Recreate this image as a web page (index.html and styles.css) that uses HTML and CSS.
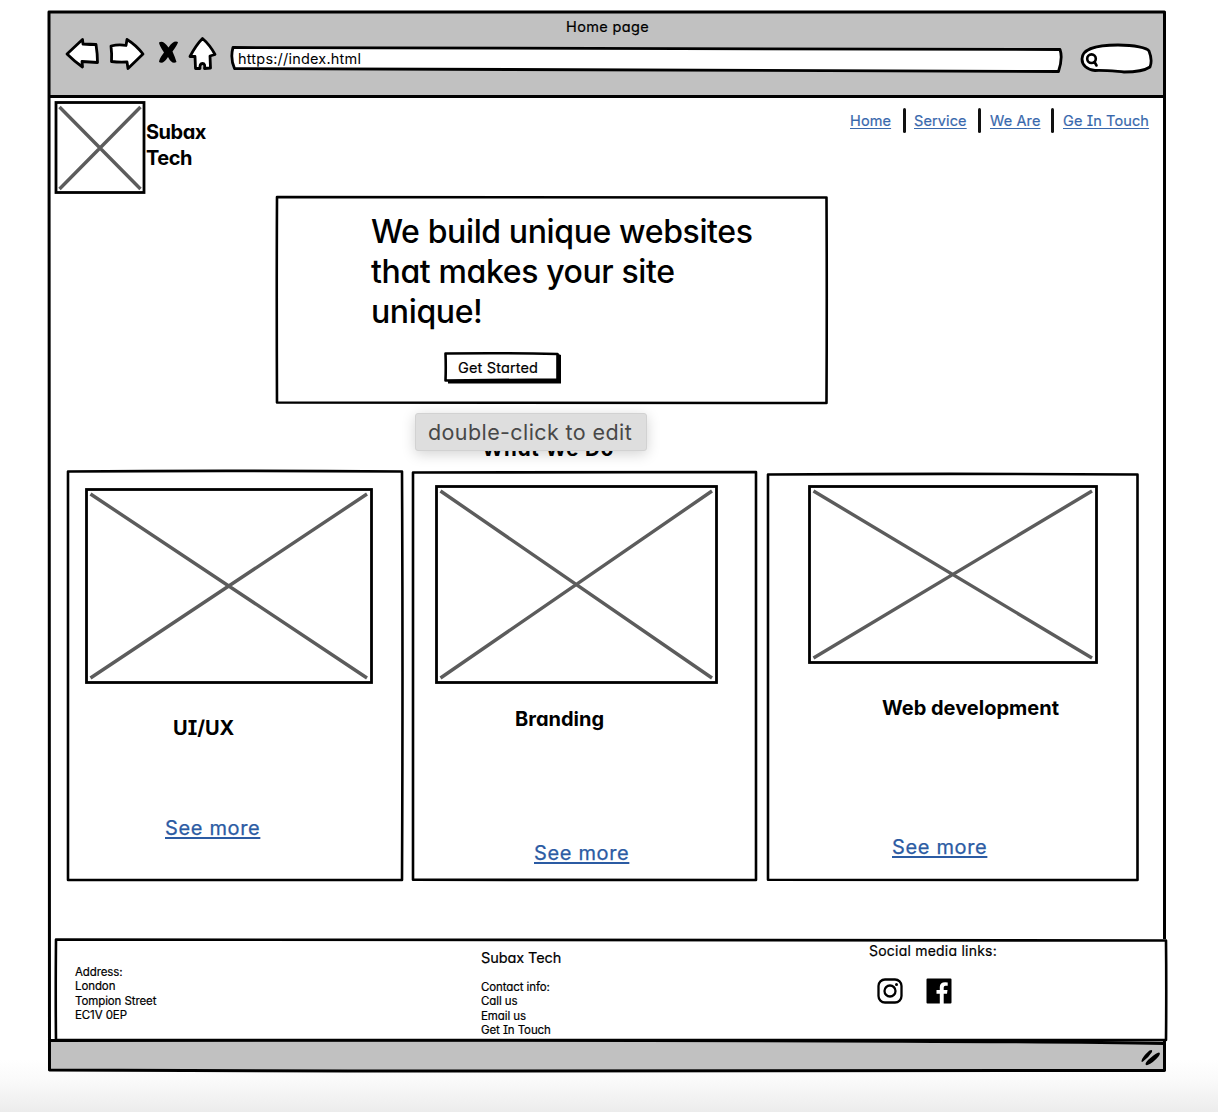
FILE: index.html
```html
<!DOCTYPE html>
<html lang="en">
<head>
<meta charset="utf-8">
<title>Home page</title>
<link rel="stylesheet" href="styles.css">
</head>
<body>
<div class="window">
  <svg class="frame ink-line window-frame"><path d="M1 1 H1116.500 Q1117.500 500 1116.500 1059.500 Q600 1058 300 1060 L1.500 1059 Q1 500 1 1Z M1 85.500 Q500 84.500 1116.500 85.500 M1 1029.500 Q900 1028.500 1116.500 1032.500"/></svg>
  <div class="toolbar">
    <div class="window-title">Home page</div>
    <div class="controls">
      <svg class="nav-icons" width="158" height="36" viewBox="62 36 158 36">
        <g class="ink-shape">
          <path d="M67 54 L82.500 39.500 L83 44 Q91 44.500 96 44.500 Q97.500 54 97.500 62.500 L82 61.500 L82.500 67 Q74 61 67 54Z"/>
          <path d="M111 46 Q119 44 126 45.500 L127 39.500 Q136 45 143 54 L128 68.500 L127 62 Q119 62.500 111.500 61.500 Q112 54 111 46Z"/>
          <path d="M202.500 38.500 Q210 45 215 54.500 L210 56 L210.500 68 L204.500 68.500 Q205.500 63.500 202.500 63.500 Q199.500 63.500 200 68.500 L195.500 68.500 L195 56.500 L190 56.500 Q196 45 202.500 38.500Z"/>
        </g>
        <path d="M159 42.500 Q163 39.500 168.500 47.500 Q173.500 40 178 42 Q178 44 172.500 51.500 Q175 57 176.500 62 Q172 65 168 57 Q163 65 159 62 Q159 59 164 52.500 Q159 45 159 42.500Z"/>
      </svg>
      <div class="address">
        <svg class="frame ink-shape"><path d="M3 1.500 Q400 1 830 3.500 Q833 12 828.500 25.500 Q400 24 4.500 22.500 Q0 12 3 1.500Z"/></svg>
        <span>https://index.html</span>
      </div>
      <svg class="search" width="76" height="34" viewBox="1078 42 76 34">
        <path class="ink-shape" d="M1082 59 C1082 47 1103 45 1118 45 C1135 45 1147 48 1149 51 C1151 56 1152 62 1150 67 C1144 71 1135 72 1124 72 C1112 71 1104 70 1095 70.500 C1087 70 1082 65 1082 59Z"/>
        <g class="ink-shape magnifier"><circle cx="1091.500" cy="58.700" r="4.300"/><path d="M1094.500 62 L1096.500 65.500"/></g>
      </svg>
    </div>
  </div>

  <header class="site-header">
    <svg class="logo" viewBox="0 0 91 93"><rect x="1.500" y="1.500" width="88" height="90"/><path d="M5 6 L86 88 M86 6 L5 88"/></svg>
    <div class="brand">Subax<br>Tech</div>
    <nav class="site-nav">
      <a>Home</a><i></i><a>Service</a><i></i><a>We Are</a><i></i><a>Ge In Touch</a>
    </nav>
  </header>

  <section class="hero">
    <svg class="frame ink-line"><path d="M1 1 Q270 .5 550.500 1.500 Q551 100 550.500 207 Q270 207.500 1 206.500 Q.5 100 1 1Z"/></svg>
    <h1>We build unique websites<br>that makes your site<br>unique!</h1>
    <div class="button">
      <svg class="frame"><path d="M4 28 L110 27 L113 1.500 L117 3 L117 31.500 L4 31.500Z"/><path class="button-face" d="M1.500 1.500 Q60 .7 113.500 2 L113.500 27.500 Q60 28 1.500 28.500 Q2 15 1.500 1.500Z"/></svg>
      <span>Get Started</span>
    </div>
  </section>

  <h2 class="section-title">What We Do</h2>

  <section class="cards">
    <article class="card card-design">
      <svg class="frame ink-line"><path d="M1 1.500 Q150 .3 335 1.500 Q336 200 335 410 Q160 410.700 1 410 Q.5 200 1 1.500Z"/></svg>
      <svg class="picture" viewBox="0 0 288 196"><rect x="1.500" y="1.500" width="285" height="193"/><path d="M5.500 6 L282 190 M282 6 L5.500 190"/></svg>
      <h3>UI/UX</h3>
      <a class="more">See more</a>
    </article>
    <article class="card card-branding">
      <svg class="frame ink-line"><path d="M1 1.500 Q170 .7 344 1 Q344.500 200 344 409 Q170 409.500 1 408.800 Q.5 200 1 1.500Z"/></svg>
      <svg class="picture" viewBox="0 0 283 199"><rect x="1.500" y="1.500" width="280" height="196"/><path d="M5.500 6 L277 193 M277 6 L5.500 193"/></svg>
      <h3>Branding</h3>
      <a class="more">See more</a>
    </article>
    <article class="card card-web">
      <svg class="frame ink-line"><path d="M1 1.500 Q180 .3 370.500 1.500 Q371 200 370.500 407 Q180 407.500 1 406.800 Q.5 200 1 1.500Z"/></svg>
      <svg class="picture" viewBox="0 0 290 179"><rect x="1.500" y="1.500" width="287" height="176"/><path d="M5.500 6 L284 173 M284 6 L5.500 173"/></svg>
      <h3>Web development</h3>
      <a class="more">See more</a>
    </article>
  </section>

  <footer class="site-footer">
    <svg class="frame ink-line"><path d="M1 .5 Q600 -.5 1111 1.500 Q1111.500 50 1111 101 Q600 100 1 101 Q.5 60 1 .5Z"/></svg>
    <div class="office">Address:<br>London<br>Tompion Street<br>EC1V 0EP</div>
    <div class="contact">
      <div class="company">Subax Tech</div>
      <div>Contact info:<br>Call us<br>Email us<br>Get In Touch</div>
    </div>
    <div class="social">
      <div>Social media links:</div>
      <div class="social-icons">
        <svg width="26" height="26" viewBox="0 0 26 26" fill="none" stroke="#000" stroke-width="2.300"><rect x="1.500" y="1.500" width="23" height="23" rx="6.500"/><circle cx="13" cy="13" r="5.500"/><circle cx="19.500" cy="6.500" r="1.500" fill="#000" stroke="none"/></svg>
        <svg width="26" height="26" viewBox="0 0 26 26"><path d="M1.500 .5H24.500Q25.500 .5 25.500 1.500V24.500Q25.500 25.500 24.500 25.500H17.700V15.800H21L21.500 12H17.700V9.500Q17.700 7.800 19.500 7.800H21.700V4.400Q13.800 3.200 13.800 9V12H10.500V15.800H13.800V25.500H1.500Q.5 25.500 .5 24.500V1.500Q.5 .5 1.500 .5Z"/></svg>
      </div>
    </div>
  </footer>

  <div class="status-bar">
    <svg width="22" height="20" viewBox="1140 1049 22 20"><path d="M1141.500 1062 Q1142 1058 1149.500 1051.500 Q1153 1050 1152 1053 Q1149 1058 1143 1062.500 Q1141.500 1063.500 1141.500 1062Z M1145.500 1065 Q1146 1062 1151 1058.500 Q1156 1054 1159 1053.500 Q1161 1054 1158.500 1057.500 Q1153 1064 1147.500 1066 Q1145.500 1066.500 1145.500 1065Z"/></svg>
  </div>

  <div class="tooltip">double-click to edit</div>
</div>
</body>
</html>
```
FILE: styles.css
```css
* { box-sizing: border-box; }
body {
  margin: 0;
  height: 1112px;
  padding: 11px 0 0 48px;
  overflow: hidden;
  background: linear-gradient(#fff 1060px, #fafafa 1080px, #ececec 1112px);
  color: #000;
  font-family: Inter, "Liberation Sans", sans-serif;
  font-feature-settings: "cv11", "cv08";
  white-space: nowrap;
}
h1, h2, h3 { margin: 0; }
svg { display: block; }

.window { position: relative; width: 1118px; height: 1060px; background: #fff; }
.frame { position: absolute; inset: 0; width: 100%; height: 100%; overflow: visible; }
.ink-line { fill: none; stroke: #000; stroke-width: 2.6px; stroke-linejoin: round; }
.window-frame { stroke-width: 3px; }
.ink-shape { fill: #fff; stroke: #000; stroke-width: 2.8px; stroke-linejoin: round; }
.magnifier { stroke-width: 2.6px; stroke-linecap: round; }

.toolbar { height: 86px; background: #c1c1c1; }
.window-title { padding: 6px 0 0 518px; font-size: 14.5px; line-height: 20px; letter-spacing: .35px; -webkit-text-stroke: .2px; }
.controls { display: flex; padding-left: 14px; }
.nav-icons { margin-top: -1px; }
.address { position: relative; width: 832px; height: 27px; margin: 9px 0 0 10px; padding-left: 8px; font-size: 14.5px; letter-spacing: .2px; line-height: 25px; }
.address span { position: relative; }
.search { margin: 5px 0 0 16px; }

.site-header { display: flex; height: 99px; padding: 4px 17px 0 6px; }
.logo { width: 92px; height: 93px; }
.logo rect, .picture rect { fill: #fff; stroke: #000; stroke-width: 2.8px; }
.logo path, .picture path { stroke: #5c5c5c; stroke-width: 3.4px; }
.brand { margin-top: 18px; font-size: 20px; font-weight: 700; line-height: 26px; letter-spacing: -.5px; }
.site-nav { display: grid; grid-template-columns: 53px 11px 64px 12px 61px 12px 86px; height: 25px; margin: 7px 0 0 auto; color: #3868ad; font-size: 14.5px; line-height: 25px; letter-spacing: .12px; -webkit-text-stroke: .2px; }
.site-nav a { justify-self: start; text-decoration: underline; text-decoration-thickness: 1px; text-underline-offset: 2px; text-decoration-skip-ink: none; }
.site-nav i { width: 2.5px; height: 25px; border-radius: 2px; background: #111; }

.hero { position: relative; width: 552px; height: 208px; margin-left: 228px; padding: 16px 0 0 95px; }
.hero h1 { font-size: 32px; font-weight: 500; line-height: 40px; letter-spacing: -.38px; }
.button { position: relative; width: 117px; height: 32px; margin: 20px 0 0 73px; padding-left: 14px; font-size: 14.5px; line-height: 32px; letter-spacing: .15px; -webkit-text-stroke: .2px; }
.button span { position: relative; }
.button-face { fill: #fff; stroke: #000; stroke-width: 2.6px; stroke-linejoin: round; }

.section-title { margin: 32px 0 8px 434px; font-size: 20.5px; line-height: 26px; letter-spacing: .8px; }

.cards { display: flex; align-items: flex-end; height: 411px; margin-left: 19px; }
.card { position: relative; display: flex; flex-direction: column; align-items: flex-start; }
.card h3 { font-size: 20px; line-height: 26px; }
.more { color: #2b5ba3; font-size: 20px; line-height: 26px; letter-spacing: .65px; text-decoration: underline; text-decoration-thickness: 2px; text-underline-offset: 2px; -webkit-text-stroke: .25px; }
.card-design { width: 336px; height: 411px; margin-right: 9px; padding: 18px 0 0 18px; }
.card-design .picture { width: 288px; height: 196px; }
.card-design h3 { margin: 31px 0 0 88px; }
.card-design .more { margin: 74px 0 0 80px; }
.card-branding { width: 345px; height: 410px; margin-right: 10px; padding: 14px 0 0 23px; }
.card-branding .picture { width: 283px; height: 199px; }
.card-branding h3 { margin: 22px 0 0 80px; }
.card-branding .more { margin: 108px 0 0 99px; }
.card-web { width: 371px; height: 408px; padding: 12px 0 0 41px; }
.card-web .picture { width: 290px; height: 179px; }
.card-web h3 { margin: 31px 0 0 74px; }
.card-web .more { margin: 113px 0 0 84px; }

.site-footer { position: relative; display: grid; grid-template-columns: 406px 388px 1fr; width: 1112px; height: 101px; margin: 58px 0 0 7px; padding-left: 20px; background: #fff; font-size: 11.5px; line-height: 14.4px; letter-spacing: -.1px; -webkit-text-stroke: .2px; }
.office { padding-top: 26px; }
.contact { padding-top: 9px; }
.company { margin-bottom: 12px; font-size: 14.5px; line-height: 20px; }
.social { padding-top: 2px; font-size: 14px; line-height: 20px; letter-spacing: .22px; }
.social-icons { display: flex; gap: 23px; padding: 17px 0 0 8px; }

.status-bar { display: flex; justify-content: flex-end; height: 31px; padding: 8px 4px 0 0; background: #c1c1c1; }

.tooltip { position: absolute; left: 367px; top: 402px; width: 232px; height: 38px; padding-left: 12px; border: 1px solid #d2d2d2; border-radius: 3px; background: #dedede; box-shadow: 0 3px 14px rgba(0, 0, 0, .18); color: #484848; font-size: 21.5px; line-height: 37px; letter-spacing: .4px; font-feature-settings: normal; }
```
